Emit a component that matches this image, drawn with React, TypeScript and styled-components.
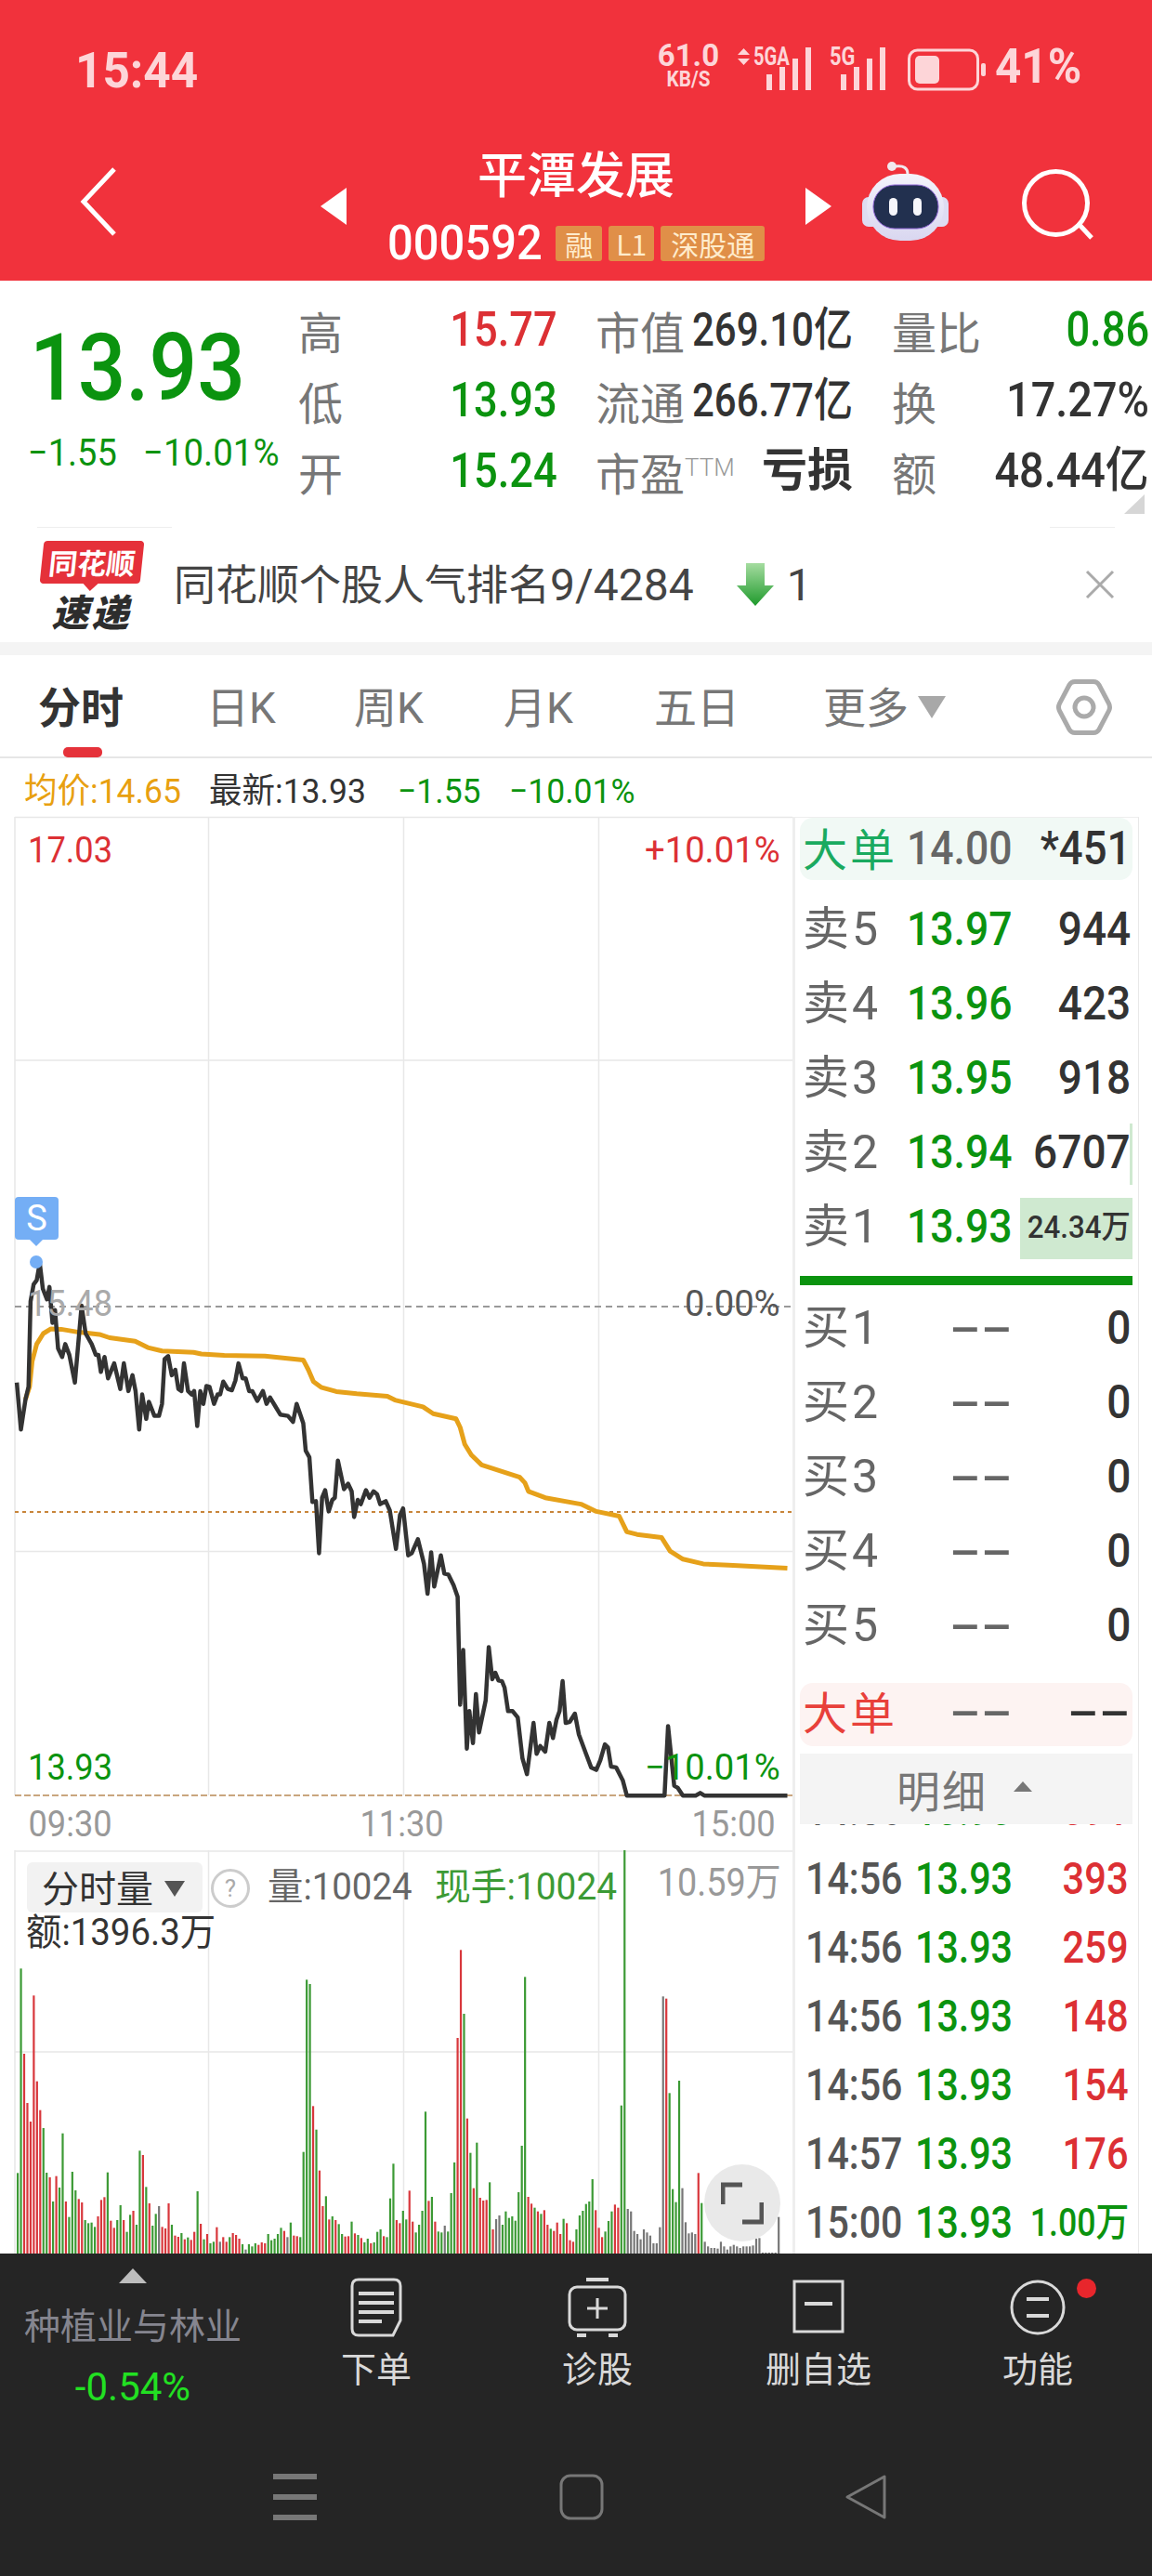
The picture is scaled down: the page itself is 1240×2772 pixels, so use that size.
import * as React from 'react'
import styled, { createGlobalStyle, css } from 'styled-components'

const CJK = '"Noto Sans CJK SC", sans-serif'
const NUM = `Roboto, ${CJK}`

const GREEN = '#0b930f'
const RED = '#dc3034'

const GlobalStyle = createGlobalStyle`
  html, body { margin: 0; padding: 0; background: #fff; }
  body { font-family: Roboto, ${CJK}; }
`

// the app's number face is narrower than anything installed, so squeeze it
const squeeze = css`
  display: inline-block;
  white-space: nowrap;
  transform: scaleX(${p => p.$x || 1});
  transform-origin: ${p => (p.$end ? '100%' : '0')} 50%;
`

const Phone = styled.div`
  width: 1240px;
  height: 2772px;
  overflow: hidden;
  display: flex;
  flex-direction: column;
  background: #fff;
`

/* ---------- red header ---------- */

const Header = styled.header`
  height: 302px;
  flex: none;
  background: #f1323c;
  display: flex;
  flex-direction: column;
`

const StatusBar = styled.div`
  height: 150px;
  padding: 46px 71px 0 81px;
  box-sizing: border-box;
  display: flex;
  align-items: flex-start;
  color: #fdd5d8;
`

const Clock = styled.div`
  ${squeeze}
  font: 700 54px/56px ${NUM};
  margin-right: auto;
  margin-top: 2px;
`

const NetSpeed = styled.div`
  width: 72px;
  font-family: ${NUM};
  font-weight: 700;
  text-align: center;
  margin-right: 17px;
`

const NetValue = styled.div`
  font-size: 33px;
  line-height: 28px;
`

const NetUnit = styled.div`
  font-size: 23px;
  line-height: 22px;
  margin-top: 1px;
  transform: scaleX(0.9);
`

const Signal = styled.div`
  position: relative;
  width: ${p => p.$w}px;
  height: 51px;
  margin-right: ${p => p.$gap}px;
  svg { display: block; position: absolute; }
`

const SignalTag = styled.span`
  ${squeeze}
  position: absolute;
  left: ${p => p.$left}px;
  top: 3px;
  font: 700 28px/24px ${NUM};
`

const Battery = styled.div`
  width: 86px;
  height: 46px;
  margin: 6px 8px 0 0;
`

const BatteryPct = styled.div`
  ${squeeze}
  font: 700 52px/52px ${NUM};
`

const TitleBar = styled.div`
  flex: 1;
  position: relative;
  display: grid;
  grid-template-columns: 345px 550px 1fr;
`

const BackCell = styled.div`
  padding: 30px 0 0 86px;
`

const StockCell = styled.div`
  display: flex;
  align-items: center;
  justify-content: space-between;
`

const Arrow = styled.div`
  width: 0;
  height: 0;
  border-top: 20px solid transparent;
  border-bottom: 20px solid transparent;
  ${p => (p.$right ? 'border-left: 28px solid #fff;' : 'border-right: 28px solid #fff;')}
  margin-bottom: 8px;
`

const StockInfo = styled.div`
  display: flex;
  flex-direction: column;
  align-items: center;
  align-self: flex-start;
  color: #fff;
`

const StockName = styled.div`
  font: 500 53px/60px ${CJK};
  margin-top: 5px;
`

const CodeRow = styled.div`
  display: flex;
  align-items: center;
  margin-top: 27px;
  gap: 7px;
`

const StockCode = styled.span`
  ${squeeze}
  font: 500 52px/40px ${NUM};
  margin-right: -3px;
`

const Badge = styled.span`
  background: #e08f48;
  color: #ffeccd;
  border-radius: 3px;
  height: 38px;
  padding: 0 ${p => p.$pad}px;
  font: 400 30px/38px ${CJK};
`

const ToolCell = styled.div`
  display: flex;
  align-items: flex-start;
  padding: 24px 0 0 33px;
  gap: 78px;
`

const SearchIcon = styled.svg`
  margin-top: 8px;
`

/* ---------- quote panel ---------- */

const Quote = styled.section`
  position: relative;
  height: 265px;
  flex: none;
  display: flex;
`

const PriceCol = styled.div`
  width: 321px;
  flex: none;
  padding: 44px 0 0 30px;
  box-sizing: border-box;
`

const BigPrice = styled.div`
  ${squeeze}
  font: 500 101px/100px ${NUM};
  color: ${GREEN};
  margin-left: 2px;
`

const PriceDelta = styled.div`
  display: flex;
  gap: 23px;
  font: 400 40px/40px ${NUM};
  color: ${GREEN};
  margin-top: 22px;
`

const DeltaValue = styled.span`
  ${squeeze}
`

const QuoteGrid = styled.div`
  display: grid;
  grid-template-columns: 279px 41px 277px 42px 277px;
  grid-auto-rows: 76px;
  padding-top: 15px;
`

const QuoteCell = styled.div`
  display: flex;
  align-items: center;
  justify-content: space-between;
`

const QuoteGap = styled.span``

const QLabel = styled.span`
  font: 400 48px/60px ${CJK};
  color: #777;
  white-space: nowrap;
`

const QValue = styled.span`
  ${squeeze}
  font: ${p => p.$weight || 500} ${p => p.$size || 52}px/60px ${NUM};
  color: ${p => p.$color || '#333'};
  margin-left: ${p => (p.$pull ? -p.$pull : 0)}px;
`

const Ttm = styled.sup`
  font: 300 26px/24px Roboto, sans-serif;
  color: #999;
  vertical-align: 16px;
`

const CornerMark = styled.div`
  position: absolute;
  right: 8px;
  bottom: 14px;
  width: 0;
  height: 0;
  border-left: 22px solid transparent;
  border-bottom: 21px solid #d6d6d6;
`

/* ---------- news strip ---------- */

const NewsStrip = styled.section`
  position: relative;
  height: 124px;
  flex: none;
  display: flex;
  align-items: center;
  padding: 0 40px 0 42px;
  border-bottom: 14px solid #f4f4f4;
`

const Tick = styled.i`
  position: absolute;
  top: 0;
  height: 1px;
  background: #eee;
  left: ${p => p.$left}px;
  width: ${p => p.$width}px;
`

const Logo = styled.div`
  width: 113px;
  height: 94px;
  flex: none;
  display: flex;
  flex-direction: column;
  align-items: center;
`

const LogoBubble = styled.div`
  width: 108px;
  height: 46px;
  background: #e5313a;
  border-radius: 4px;
  transform: skewX(-6deg);
  color: #fff;
  font: 700 31px/46px ${CJK};
  text-align: center;
  position: relative;
  &::after {
    content: '';
    position: absolute;
    left: 47px;
    bottom: -8px;
    border-left: 8px solid transparent;
    border-right: 8px solid transparent;
    border-top: 8px solid #e5313a;
  }
`

const LogoText = styled.div`
  color: #2d2d2d;
  font: italic 900 40px/46px ${CJK};
  letter-spacing: 3px;
  margin-top: 6px;
`

const NewsText = styled.div`
  font: 400 45px/60px Roboto, ${CJK};
  color: #444;
  margin: 2px 0 0 32px;
`

const NewsNum = styled.span`
  font: 400 48px/60px Roboto, sans-serif;
`

const DownArrow = styled.div`
  margin-left: 46px;
  width: 40px;
  height: 46px;
`

const NewsCount = styled.div`
  font: 400 48px/60px Roboto, sans-serif;
  color: #444;
  margin: 2px auto 0 14px;
`

/* ---------- period tabs ---------- */

const Tabs = styled.nav`
  height: 111px;
  flex: none;
  box-sizing: border-box;
  border-bottom: 2px solid #e6e6e6;
  display: grid;
  grid-template-columns: 181px 159px 161px 162px 182px 247px 1fr;
  padding: 0 0 0 41px;
  position: relative;
`

const TabItem = styled.div`
  font: ${p => (p.$active ? 700 : 400)} 46px/114px Roboto, ${CJK};
  color: ${p => (p.$active ? '#333' : '#777')};
  display: flex;
  align-items: flex-start;
`

const TabCaret = styled.i`
  width: 0;
  height: 0;
  margin: 44px 0 0 10px;
  border-left: 15px solid transparent;
  border-right: 15px solid transparent;
  border-top: 24px solid #a8a8a8;
`

const TabMark = styled.i`
  position: absolute;
  left: 68px;
  bottom: -1px;
  width: 42px;
  height: 11px;
  border-radius: 5px;
  background: #e5323a;
`

const GearSlot = styled.div`
  margin: 26px 0 0 3px;
  svg { display: block; }
`

const Legend = styled.div`
  height: 63px;
  flex: none;
  display: flex;
  align-items: flex-start;
  padding-left: 26px;
  font: 400 37px/71px ${NUM};
`

const LegendItem = styled.span`
  ${squeeze}
  color: ${p => p.$color};
  margin-right: ${p => p.$gap}px;
`

/* ---------- main body ---------- */

const Body = styled.main`
  flex: 1;
  min-height: 0;
  display: grid;
  grid-template-columns: 853px 373px;
`

const ChartCol = styled.div`
  display: flex;
  flex-direction: column;
  min-height: 0;
`

const PriceChart = styled.div`
  position: relative;
  height: 1054px;
  flex: none;
  svg { display: block; overflow: visible; }
`

const ChartLabel = styled.span`
  ${squeeze}
  position: absolute;
  font: 400 39px/40px ${NUM};
  color: ${p => p.$color};
  ${p => (p.$end ? 'right: 13px;' : 'left: 30px;')}
  top: ${p => p.$top}px;
`

const SMark = styled.div`
  position: absolute;
  left: 16px;
  top: 409px;
  width: 47px;
  height: 46px;
  border-radius: 4px;
  background: #74aef5;
  color: #fff;
  font: 400 38px/46px Roboto, sans-serif;
  text-align: center;
  &::after {
    content: '';
    position: absolute;
    left: 16px;
    bottom: -7px;
    border-left: 7px solid transparent;
    border-right: 7px solid transparent;
    border-top: 7px solid #74aef5;
  }
`

const TimeAxis = styled.div`
  height: 58px;
  flex: none;
  display: flex;
  justify-content: space-between;
  padding: 4px 15px 0 27px;
  box-sizing: border-box;
  font: 400 39px/52px ${NUM};
  color: #999;
`

const AxisTime = styled.span`
  ${squeeze}
  transform-origin: 50% 50%;
`

const VolumeChart = styled.div`
  position: relative;
  flex: 1;
  min-height: 0;
  overflow: hidden;
  svg { display: block; }
`

const VolHead = styled.div`
  position: absolute;
  left: 29px;
  top: 13px;
  right: 13px;
  display: flex;
  align-items: flex-start;
  font: 400 40px/54px ${NUM};
`

const VolPill = styled.div`
  width: 189px;
  height: 54px;
  background: #f2f2f2;
  border-radius: 6px;
  font: 400 40px/52px ${CJK};
  color: #333;
  padding-left: 16px;
  box-sizing: border-box;
  display: flex;
`

const PillCaret = styled.i`
  width: 0;
  height: 0;
  margin: 20px 0 0 12px;
  border-left: 11px solid transparent;
  border-right: 11px solid transparent;
  border-top: 17px solid #555;
`

const HelpDot = styled.div`
  width: 36px;
  height: 36px;
  margin: 7px 19px 0 9px;
  border: 3px solid #ccc;
  border-radius: 50%;
  color: #aaa;
  font: 400 26px/36px Roboto, sans-serif;
  text-align: center;
  background: #fff;
`

const VolText = styled.span`
  ${squeeze}
  color: ${p => p.$color};
  margin-right: ${p => p.$gap || 0}px;
  ${p => p.$end && 'margin-left: auto; margin-top: -5px; font-size: 42px;'}
`

const AmountLine = styled.div`
  ${squeeze}
  position: absolute;
  left: 28px;
  top: 68px;
  color: #333;
  font: 400 40px/42px ${NUM};
`

const ExpandButton = styled.div`
  position: absolute;
  left: 758px;
  top: 338px;
  width: 82px;
  height: 83px;
  border-radius: 50%;
  background: rgba(232, 232, 232, 0.95);
  display: flex;
  align-items: center;
  justify-content: center;
`

/* ---------- order book ---------- */

const BookCol = styled.aside`
  display: flex;
  flex-direction: column;
  min-height: 0;
  box-sizing: border-box;
  border-left: 3px solid #eee;
  border-right: 1px solid #e8e8e8;
  border-top: 1px solid #eee;
  padding-left: 5px;
  width: 373px;
  position: relative;
`

const bookGrid = css`
  width: 358px;
  display: grid;
  grid-template-columns: 118px 108px 1fr;
  align-items: center;
  padding: 0 2px 0 3px;
  box-sizing: border-box;
`

const BigOrder = styled.div`
  ${bookGrid}
  height: ${p => p.$h}px;
  flex: none;
  margin: ${p => p.$mt}px 0 ${p => p.$mb || 0}px;
  padding-bottom: ${p => p.$pb}px;
  border-radius: 14px;
  background: ${p => p.$bg};
`

const BigLabel = styled.span`
  font: 400 48px/60px ${CJK};
  color: ${p => p.$color};
  white-space: nowrap;
  letter-spacing: 3px;
  margin-top: -4px;
`

const BookRow = styled.div`
  ${bookGrid}
  height: 80px;
  position: relative;
  isolation: isolate;
`

const RowLabel = styled.span`
  font: 400 50px/60px Roboto, ${CJK};
  color: #666;
  letter-spacing: 3px;
`

const RowPrice = styled.span`
  ${squeeze}
  justify-self: end;
  font: 500 50px/60px ${NUM};
  color: ${p => p.$color || GREEN};
`

const RowQty = styled.span`
  ${squeeze}
  justify-self: end;
  font: 500 ${p => p.$size || 50}px/60px ${NUM};
  color: #333;
`

const QtyBar = styled.i`
  position: absolute;
  right: 0;
  top: 9px;
  width: ${p => p.$w}px;
  height: 66px;
  background: #cfe9d0;
  z-index: -1;
`

const BookDivider = styled.div`
  width: 358px;
  height: 10px;
  flex: none;
  margin: 13px 0 6px;
  background: ${GREEN};
`

const DetailBar = styled.div`
  width: 358px;
  height: 76px;
  flex: none;
  margin-top: 8px;
  background: #f4f4f4;
  font: 400 47px/76px ${CJK};
  color: #777;
  letter-spacing: 2px;
  display: flex;
  justify-content: center;
  align-items: flex-start;
  padding-right: 4px;
  box-sizing: border-box;
  position: relative;
  z-index: 1;
`

const DetailCaret = styled.i`
  width: 0;
  height: 0;
  margin: 30px 0 0 28px;
  border-left: 10px solid transparent;
  border-right: 10px solid transparent;
  border-bottom: 11px solid #777;
`

const TickList = styled.div`
  flex: 1;
  min-height: 0;
  overflow: hidden;
`

const TickInner = styled.div`
  margin-top: -52px;
`

const TickRow = styled.div`
  width: 358px;
  height: 74px;
  display: grid;
  grid-template-columns: 118px 103px 1fr;
  align-items: center;
  padding: 0 4px 0 6px;
  box-sizing: border-box;
  font: 500 49px/60px ${NUM};
`

const TickTime = styled.span`
  ${squeeze}
  color: #555;
`

const TickPrice = styled.span`
  ${squeeze}
  color: ${GREEN};
`

const TickQty = styled.span`
  ${squeeze}
  justify-self: end;
  color: ${p => p.$color};
  font-size: ${p => p.$size || 49}px;
`

/* ---------- bottom bars ---------- */

const Footer = styled.footer`
  height: 347px;
  flex: none;
  background: #252525;
  display: flex;
  flex-direction: column;
`

const ActionRow = styled.div`
  height: 200px;
  flex: none;
  display: grid;
  grid-template-columns: 286px 238px 238px 238px 1fr;
`

const Sector = styled.div`
  display: flex;
  flex-direction: column;
  align-items: center;
  padding-top: 16px;
`

const SectorCaret = styled.i`
  width: 0;
  height: 0;
  border-left: 15px solid transparent;
  border-right: 15px solid transparent;
  border-bottom: 16px solid #bdbdbd;
`

const SectorName = styled.div`
  font: 400 39px/50px ${CJK};
  color: #85858f;
  margin-top: 18px;
`

const SectorPct = styled.div`
  font: 400 42px/50px ${NUM};
  color: #22e022;
  margin-top: 19px;
`

const Action = styled.div`
  position: relative;
  display: flex;
  flex-direction: column;
  align-items: center;
  padding-top: 26px;
  color: #d9d9d9;
  margin-left: ${p => p.$shift || 0}px;
  svg { display: block; }
`

const ActionLabel = styled.div`
  font: 400 38px/50px ${CJK};
  margin-top: 7px;
`

const NoticeDot = styled.i`
  position: absolute;
  right: 60px;
  top: 27px;
  width: 21px;
  height: 21px;
  border-radius: 50%;
  background: #e8262c;
`

const NavRow = styled.div`
  flex: 1;
  display: grid;
  grid-template-columns: 294px 61px 247px 61px 245px 60px;
  align-items: flex-start;
  padding-top: 37px;
  svg { display: block; }
`

const NavSpacer = styled.i``

/* ---------- data ---------- */

const LINE =
  '33,520 41,630 50,560 56,530 60,330 66,290 72,280 78,240 84,300 92,325 97,296 103,380 108,350 114,440 122,460 128,430 136,455 147,520 160,340 168,405 180,430 188,455 193,455 198,495 205,460 212,510 224,475 236,535 243,475 252,540 260,503 266,540 273,630 279,548 287,605 292,565 303,598 312,598 318,570 323,465 330,458 337,503 344,490 350,535 356,540 361,475 369,540 376,548 381,540 387,622 393,540 399,570 405,528 411,530 420,570 427,548 432,548 438,518 447,535 455,538 462,515 468,475 476,510 482,510 489,540 495,540 505,563 516,540 523,570 530,555 540,575 550,595 565,598 575,612 582,570 595,615 600,680 607,695 613,800 620,798 626,920 632,790 638,772 645,822 652,795 657,790 663,703 675,770 683,757 690,775 695,835 702,795 708,805 718,772 725,790 733,775 740,782 746,805 757,798 765,820 777,910 785,830 791,815 801,925 808,920 820,887 832,945 839,1015 846,918 852,998 865,925 872,968 880,970 890,995 898,1022 903,1275 909,1147 916,1378 921,1290 928,1365 934,1250 940,1340 953,1265 959,1140 966,1215 972,1200 978,1218 985,1220 990,1235 997,1290 1006,1290 1016,1305 1025,1400 1034,1438 1047,1318 1053,1390 1060,1372 1070,1385 1078,1318 1085,1353 1092,1310 1098,1290 1104,1220 1110,1318 1118,1315 1128,1296 1136,1345 1150,1390 1160,1422 1170,1428 1178,1405 1187,1368 1193,1375 1199,1420 1209,1422 1222,1452 1230,1488 1304,1488 1311,1325 1323,1465 1330,1470 1340,1488 1365,1488 1374,1482 1382,1488 1545,1488'

const AVG =
  '50,560 58,530 63,470 72,430 85,405 100,394 120,395 155,402 195,407 215,415 265,423 290,438 318,446 380,449 395,453 440,456 520,458 595,467 605,490 615,518 630,531 660,541 700,546 760,552 775,561 830,577 850,593 895,605 903,625 912,665 925,690 945,713 1020,742 1030,755 1037,775 1070,790 1140,805 1170,822 1215,833 1230,870 1250,876 1298,883 1315,915 1340,934 1380,945 1430,948 1545,955'

// crop coordinates of the chart region -> chart pixels
const toChart = (s: string) =>
  s
    .split(' ')
    .map(p => {
      const [x, y] = p.split(',').map(Number)
      return `${(x / 1.823).toFixed(1)},${(1250 + y / 2.178 - 880).toFixed(1)}`
    })
    .join(' ')

const VOLUME =
  '1108g 448g 723r 882r 942r 535r 812r 905r 963g 1107g 1122r 1200g 1118r 1155g 980g 1200r 1250g 1104g 1164g 1192r 1203r 1260g 1270g 1268g 1282g 1248r 1195r 1186r 1106g 1262r 1285r 1260g 1212g 1260r 1298g 1243g 1230r 1275g 1036g 1050r 1153g 1206r 1278g 1240g 1215n 1282r 1287r 1206r 1275g 1310r 1314r 1302g 1322r 1316g 1324r 1298r 1167g 1272r 1322g 1305r 1335g 1330g 1283r 1330n 1315r 1330r 1315g 1302r 1308r 1320r 1338g 1355n 1338g 1345g 1335g 1340r 1332r 1335r 1305g 1325g 1320g 1305g 1285g 1295r 1315n 1268g 1310r 1312r 1315g 1040g 484g 498g 892r 968g 1100r 1215r 1183g 1258r 1248g 1260r 1273g 1305g 1313r 1312r 1265g 1303r 1308g 1318r 1332g 1320g 1335r 1332g 1298g 1290g 1312r 1315g 1190g 1078g 1260r 1270r 1230g 1258g 1165r 1265r 1300g 1275g 1230g 910g 1198r 1185g 1265r 1297g 1300g 1278n 1297g 1173g 1074g 672r 388r 594g 932r 1043g 1157r 1010g 1188r 1197r 1195r 1138g 1290r 1257n 1245n 1275g 1232g 1253g 1248g 1262g 1170g 1020g 475g 1185r 1207r 1220g 1232r 1240g 1228r 1275r 1288g 1295r 1268r 1305r 1256g 1270r 1325r 1330r 1290g 1245g 1230g 1208g 1200g 1128g 1228r 1285r 1315r 1297g 1263g 1232g 1210r 1220r 890g 60g 1224n 1232n 1295n 1305n 1322n 1290n 1300n 1310n 1335n 1335n 1283n 538n 545r 850g 1160g 1202g 810g 1157n 1267n 1303n 1300n 1305n 1108r 1205g 1330n 1345n 1350n 1350n 1352n 1330n 1345n 1355n 1345n 1340n 1345n 1350n 1345n 1345n 1345n 1342n 1320n 1318n 1365n 1365n 1365n 1365n 1365n 1250n'

const VOL_COLORS: Record<string, string> = { g: '#3c9a35', r: '#d8373c', n: '#777' }

const SELLS: [string, string, string, number][] = [
  ['卖5', '13.97', '944', 0],
  ['卖4', '13.96', '423', 0],
  ['卖3', '13.95', '918', 0],
  ['卖2', '13.94', '6707', 3],
]

const TICKS: [string, string, string][] = [
  ['14:56', '13.93', '391'],
  ['14:56', '13.93', '393'],
  ['14:56', '13.93', '259'],
  ['14:56', '13.93', '148'],
  ['14:56', '13.93', '154'],
  ['14:57', '13.93', '176'],
]

/* ---------- small drawings ---------- */

const SignalBars = () => (
  <svg width="48" height="46" viewBox="0 0 48 46" fill="#fdd5d8" style={{ right: 0, top: 5 }}>
    <rect x="0" y="29" width="6" height="17" />
    <rect x="14" y="21" width="6" height="25" />
    <rect x="28" y="12" width="6" height="34" />
    <rect x="42" y="0" width="6" height="46" />
  </svg>
)

const Robot = () => (
  <svg width="94" height="88" viewBox="0 0 94 88">
    <defs>
      <linearGradient id="head" x1="0" y1="0" x2="0" y2="1">
        <stop offset="0" stopColor="#f4f3fb" />
        <stop offset="1" stopColor="#d9d7f0" />
      </linearGradient>
    </defs>
    <path d="M49 13 C49 7 45 4 36 5" stroke="#f1e9ee" strokeWidth="3" fill="none" />
    <circle cx="32" cy="5" r="5" fill="#f1e9ee" />
    <rect x="0" y="38" width="93" height="32" rx="7" fill="#dedcf2" />
    <rect x="5" y="13" width="83" height="72" rx="36" fill="url(#head)" />
    <rect x="12" y="25" width="70" height="47" rx="23" fill="#22304f" stroke="#8d63d4" strokeWidth="1" />
    <rect x="29" y="39" width="9" height="19" rx="4.5" fill="#f6f6fb" />
    <rect x="55" y="39" width="9" height="19" rx="4.5" fill="#f6f6fb" />
  </svg>
)

const Corners = () => (
  <svg width="46" height="46" viewBox="0 0 46 46" fill="none" stroke="#555" strokeWidth="5">
    <path d="M2 24 V3 H23 M44 22 V43 H23" />
  </svg>
)

export default function App() {
  return (
    <Phone>
      <GlobalStyle />
      <Header>
        <StatusBar>
          <Clock $x={0.95}>15:44</Clock>
          <NetSpeed>
            <NetValue>61.0</NetValue>
            <NetUnit>KB/S</NetUnit>
          </NetSpeed>
          <Signal $w={79} $gap={20}>
            <svg width="13" height="18" viewBox="0 0 13 18" fill="#fdd5d8" style={{ left: 0, top: 6 }}>
              <path d="M6.5 0 L13 7 H0 Z M0 11 H13 L6.5 18 Z" />
            </svg>
            <SignalTag $left={17} $x={0.72}>5GA</SignalTag>
            <SignalBars />
          </Signal>
          <Signal $w={60} $gap={24}>
            <SignalTag $left={0} $x={0.78}>5G</SignalTag>
            <SignalBars />
          </Signal>
          <Battery>
            <svg width="86" height="46" viewBox="0 0 86 46">
              <rect x="1.5" y="2" width="74" height="42" rx="9" fill="none" stroke="#fdd5d8" strokeWidth="3" />
              <rect x="8" y="8" width="26" height="30" rx="5" fill="#fdd5d8" />
              <rect x="79" y="16" width="5" height="14" rx="2" fill="#fdd5d8" />
            </svg>
          </Battery>
          <BatteryPct $x={0.95}>41%</BatteryPct>
        </StatusBar>
        <TitleBar>
          <BackCell>
            <svg width="40" height="74" viewBox="0 0 40 74" fill="none" stroke="#fff" strokeWidth="5">
              <path d="M37 2 L4 37 L37 72" />
            </svg>
          </BackCell>
          <StockCell>
            <Arrow />
            <StockInfo>
              <StockName>平潭发展</StockName>
              <CodeRow>
                <StockCode $x={0.94}>000592</StockCode>
                <Badge $pad={10}>融</Badge>
                <Badge $pad={8}>L1</Badge>
                <Badge $pad={11}>深股通</Badge>
              </CodeRow>
            </StockInfo>
            <Arrow $right />
          </StockCell>
          <ToolCell>
            <Robot />
            <SearchIcon width="78" height="76" viewBox="0 0 78 76" fill="none" stroke="#fff" strokeWidth="5">
              <circle cx="36.5" cy="36.5" r="34" />
              <path d="M62 60 L75 74" />
            </SearchIcon>
          </ToolCell>
        </TitleBar>
      </Header>

      <Quote>
        <PriceCol>
          <BigPrice $x={0.9}>13.93</BigPrice>
          <PriceDelta>
            <DeltaValue $x={0.95}>−1.55</DeltaValue>
            <DeltaValue $x={0.96}>−10.01%</DeltaValue>
          </PriceDelta>
        </PriceCol>
        <QuoteGrid>
          <QuoteCell>
            <QLabel>高</QLabel>
            <QValue $end $x={0.87} $color={RED}>15.77</QValue>
          </QuoteCell>
          <QuoteGap />
          <QuoteCell>
            <QLabel>市值</QLabel>
            <QValue $end $pull={40} $x={0.84} $size={50}>269.10亿</QValue>
          </QuoteCell>
          <QuoteGap />
          <QuoteCell>
            <QLabel>量比</QLabel>
            <QValue $end $x={0.87} $color={GREEN}>0.86</QValue>
          </QuoteCell>
          <QuoteCell>
            <QLabel>低</QLabel>
            <QValue $end $x={0.87} $color={GREEN}>13.93</QValue>
          </QuoteCell>
          <QuoteGap />
          <QuoteCell>
            <QLabel>流通</QLabel>
            <QValue $end $pull={40} $x={0.84} $size={50}>266.77亿</QValue>
          </QuoteCell>
          <QuoteGap />
          <QuoteCell>
            <QLabel>换</QLabel>
            <QValue $end $x={0.9}>17.27%</QValue>
          </QuoteCell>
          <QuoteCell>
            <QLabel>开</QLabel>
            <QValue $end $x={0.87} $color={GREEN}>15.24</QValue>
          </QuoteCell>
          <QuoteGap />
          <QuoteCell>
            <QLabel>
              市盈<Ttm>TTM</Ttm>
            </QLabel>
            <QValue $end $weight={700} $size={49}>亏损</QValue>
          </QuoteCell>
          <QuoteGap />
          <QuoteCell>
            <QLabel>额</QLabel>
            <QValue $end $x={0.9}>48.44亿</QValue>
          </QuoteCell>
        </QuoteGrid>
        <CornerMark />
      </Quote>

      <NewsStrip>
        <Tick $left={40} $width={145} />
        <Tick $left={1130} $width={70} />
        <Logo>
          <LogoBubble>同花顺</LogoBubble>
          <LogoText>速递</LogoText>
        </Logo>
        <NewsText>
          同花顺个股人气排名<NewsNum>9/4284</NewsNum>
        </NewsText>
        <DownArrow>
          <svg width="40" height="46" viewBox="0 0 40 46">
            <defs>
              <linearGradient id="dn" x1="0" y1="0" x2="0" y2="1">
                <stop offset="0" stopColor="#a5dca0" />
                <stop offset="1" stopColor="#1f9a2c" />
              </linearGradient>
            </defs>
            <path d="M10 0 H30 V24 H40 L20 46 L0 24 H10 Z" fill="url(#dn)" />
          </svg>
        </DownArrow>
        <NewsCount>1</NewsCount>
        <svg width="32" height="32" viewBox="0 0 32 32" stroke="#aaa" strokeWidth="3">
          <path d="M2 2 L30 30 M30 2 L2 30" />
        </svg>
      </NewsStrip>

      <Tabs>
        <TabItem $active>分时</TabItem>
        <TabItem>日K</TabItem>
        <TabItem>周K</TabItem>
        <TabItem>月K</TabItem>
        <TabItem>五日</TabItem>
        <TabItem>
          更多
          <TabCaret />
        </TabItem>
        <TabItem>
          <GearSlot>
            <svg width="62" height="60" viewBox="0 0 62 60" fill="none" stroke="#aaa" strokeWidth="5">
              <path d="M21 2.5 H41 Q45 2.5 47 6 L57.5 26 Q59.5 30 57.5 34 L47 54 Q45 57.5 41 57.5 H21 Q17 57.5 15 54 L4.5 34 Q2.5 30 4.5 26 L15 6 Q17 2.5 21 2.5 Z" />
              <circle cx="31" cy="30" r="10" />
            </svg>
          </GearSlot>
        </TabItem>
        <TabMark />
      </Tabs>

      <Legend>
        <LegendItem $x={0.96} $color="#e8a010" $gap={23}>均价:14.65</LegendItem>
        <LegendItem $x={0.96} $color="#333" $gap={27}>最新:13.93</LegendItem>
        <LegendItem $x={0.96} $color={GREEN} $gap={27}>−1.55</LegendItem>
        <LegendItem $x={0.96} $color={GREEN} $gap={0}>−10.01%</LegendItem>
      </Legend>

      <Body>
        <ChartCol>
          <PriceChart>
            <svg width="853" height="1054" viewBox="0 0 853 1054">
              <g stroke="#e8e8e8" strokeWidth="1.5" fill="none">
                <path d="M16 .5 H853 M16 262 H853 M16 790.5 H853 M16 0 V1053 M224.5 0 V1053 M434.5 0 V1053 M644.5 0 V1053" />
              </g>
              <path d="M16 527 H853" stroke="#999" strokeWidth="2" strokeDasharray="7 5" />
              <path d="M16 748 H853" stroke="#c8853a" strokeWidth="2" strokeDasharray="4 4" />
              <path d="M16 1053 H853" stroke="#c9a67e" strokeWidth="2" strokeDasharray="7 3" />
              <polyline points={toChart(AVG)} fill="none" stroke="#e6a11a" strokeWidth="5" strokeLinejoin="round" />
              <polyline points={toChart(LINE)} fill="none" stroke="#333" strokeWidth="4.5" strokeLinejoin="round" />
              <circle cx="39" cy="479" r="7" fill="#74aef5" />
            </svg>
            <ChartLabel $x={0.93} $color={RED} $top={16}>17.03</ChartLabel>
            <ChartLabel $end $x={0.98} $color={RED} $top={16}>+10.01%</ChartLabel>
            <ChartLabel $x={0.93} $color="#aaa" $top={504}>15.48</ChartLabel>
            <ChartLabel $end $x={0.98} $color="#555" $top={504}>0.00%</ChartLabel>
            <ChartLabel $x={0.93} $color={GREEN} $top={1003}>13.93</ChartLabel>
            <ChartLabel $end $x={0.98} $color={GREEN} $top={1003}>−10.01%</ChartLabel>
            <SMark>S</SMark>
          </PriceChart>
          <TimeAxis>
            <AxisTime $x={0.93}>09:30</AxisTime>
            <AxisTime $x={0.93}>11:30</AxisTime>
            <AxisTime $x={0.93}>15:00</AxisTime>
          </TimeAxis>
          <VolumeChart>
            <svg width="853" height="434" viewBox="0 0 853 434">
              <path d="M16 1 H853 M16 217 H853 M16 0 V434 M224.5 0 V434 M434.5 0 V434 M644.5 0 V434" stroke="#e8e8e8" strokeWidth="1.5" fill="none" />
              {VOLUME.split(' ').map((t, i) => {
                const top = parseInt(t, 10) / 3 - 22
                return <rect key={i} x={18 + i * 3.456} y={top} width="2.2" height={434 - top} fill={VOL_COLORS[t.slice(-1)]} />
              })}
            </svg>
            <VolHead>
              <VolPill>
                分时量
                <PillCaret />
              </VolPill>
              <HelpDot>?</HelpDot>
              <VolText $x={0.96} $color="#666" $gap={18}>量:10024</VolText>
              <VolText $x={0.97} $color="#3c9a35">现手:10024</VolText>
              <VolText $end $x={0.9} $color="#999">10.59万</VolText>
            </VolHead>
            <AmountLine $x={0.96}>额:1396.3万</AmountLine>
            <ExpandButton>
              <Corners />
            </ExpandButton>
          </VolumeChart>
        </ChartCol>

        <BookCol>
          <BigOrder $h={67} $mt={0} $mb={13} $pb={2} $bg="#f1f9f5">
            <BigLabel $color="#1aaa60">大单</BigLabel>
            <RowPrice $end $x={0.89} $color="#666">14.00</RowPrice>
            <RowQty $end $x={0.91}>*451</RowQty>
          </BigOrder>
          {SELLS.map(([l, p, q, bar]) => (
            <BookRow key={l}>
              <RowLabel>{l}</RowLabel>
              <RowPrice $end $x={0.89}>{p}</RowPrice>
              <RowQty $end $x={0.92}>{q}</RowQty>
              {bar > 0 && <QtyBar $w={bar} />}
            </BookRow>
          ))}
          <BookRow>
            <RowLabel>卖1</RowLabel>
            <RowPrice $end $x={0.89}>13.93</RowPrice>
            <RowQty $end $x={0.92} $size={34}>24.34万</RowQty>
            <QtyBar $w={121} />
          </BookRow>
          <BookDivider />
          {['买1', '买2', '买3', '买4', '买5'].map(l => (
            <BookRow key={l}>
              <RowLabel>{l}</RowLabel>
              <RowPrice $end $x={2} $color="#666">--</RowPrice>
              <RowQty $end $x={0.92}>0</RowQty>
            </BookRow>
          ))}
          <BigOrder $h={68} $mt={22} $pb={6} $bg="#fdf3f2">
            <BigLabel $color="#e8403a">大单</BigLabel>
            <RowPrice $end $x={2} $color="#666">--</RowPrice>
            <RowQty $end $x={2}>--</RowQty>
          </BigOrder>
          <DetailBar>
            明细
            <DetailCaret />
          </DetailBar>
          <TickList>
            <TickInner>
              {TICKS.map(([t, p, q], i) => (
                <TickRow key={i}>
                  <TickTime $x={0.84}>{t}</TickTime>
                  <TickPrice $x={0.84}>{p}</TickPrice>
                  <TickQty $end $x={0.85} $color={RED}>{q}</TickQty>
                </TickRow>
              ))}
              <TickRow>
                <TickTime $x={0.84}>15:00</TickTime>
                <TickPrice $x={0.84}>13.93</TickPrice>
                <TickQty $end $x={0.85} $color={GREEN} $size={42}>1.00万</TickQty>
              </TickRow>
            </TickInner>
          </TickList>
        </BookCol>
      </Body>

      <Footer>
        <ActionRow>
          <Sector>
            <SectorCaret />
            <SectorName>种植业与林业</SectorName>
            <SectorPct>-0.54%</SectorPct>
          </Sector>
          <Action>
            <svg width="56" height="64" viewBox="0 0 56 64" fill="none" stroke="#d9d9d9" strokeWidth="3">
              <path d="M9 2 H47 Q54 2 54 9 V46 L46 62 H9 Q2 62 2 55 V9 Q2 2 9 2 Z" />
              <path d="M9 17 H47 M9 27 H47 M9 37 H47 M9 47 H34" strokeWidth="4" />
            </svg>
            <ActionLabel>下单</ActionLabel>
          </Action>
          <Action>
            <svg width="64" height="64" viewBox="0 0 64 64" fill="none" stroke="#d9d9d9" strokeWidth="3">
              <path d="M20 2 H44" strokeWidth="4" />
              <rect x="2" y="10" width="60" height="46" rx="8" />
              <path d="M10 62 H20 M44 62 H54" strokeWidth="4" />
              <path d="M32 22 V44 M21 33 H43" />
            </svg>
            <ActionLabel>诊股</ActionLabel>
          </Action>
          <Action>
            <svg width="56" height="64" viewBox="0 0 56 64" fill="none" stroke="#d9d9d9" strokeWidth="3">
              <rect x="2" y="4" width="52" height="54" />
              <path d="M13 28 H43" strokeWidth="4" />
            </svg>
            <ActionLabel>删自选</ActionLabel>
          </Action>
          <Action $shift={-6}>
            <svg width="60" height="64" viewBox="0 0 60 64" fill="none" stroke="#d9d9d9" strokeWidth="3">
              <circle cx="30" cy="32" r="28" />
              <path d="M18 23 H42 M18 41 H42" strokeWidth="4" />
            </svg>
            <ActionLabel>功能</ActionLabel>
            <NoticeDot />
          </Action>
        </ActionRow>
        <NavRow>
          <NavSpacer />
          <svg width="48" height="50" viewBox="0 0 48 50" fill="#777">
            <rect y="0" width="47" height="6" />
            <rect y="22" width="47" height="6" />
            <rect y="44" width="47" height="6" />
          </svg>
          <NavSpacer />
          <svg width="48" height="50" viewBox="0 0 48 50" fill="none" stroke="#777" strokeWidth="3">
            <rect x="2" y="2" width="44" height="46" rx="10" />
          </svg>
          <NavSpacer />
          <svg width="48" height="50" viewBox="0 0 48 50" fill="none" stroke="#777" strokeWidth="3" strokeLinejoin="round">
            <path d="M44 3 V47 L4 25 Z" />
          </svg>
        </NavRow>
      </Footer>
    </Phone>
  )
}
